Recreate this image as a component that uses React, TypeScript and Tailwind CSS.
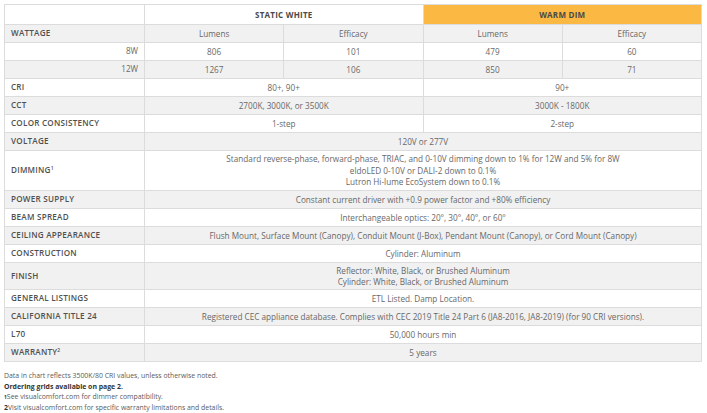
import React from "react";

type Row = {
  label: React.ReactNode;
  cells: { text: React.ReactNode; span: string }[];
  h?: string;
  right?: boolean;
};

export default function App() {
  const rows: Row[] = [
    {
      label: "WATTAGE",
      cells: [
        { text: "Lumens", span: "" },
        { text: "Efficacy", span: "" },
        { text: "Lumens", span: "" },
        { text: "Efficacy", span: "" },
      ],
    },
    {
      label: "8W",
      right: true,
      cells: [
        { text: "806", span: "" },
        { text: "101", span: "" },
        { text: "479", span: "" },
        { text: "60", span: "" },
      ],
    },
    {
      label: "12W",
      right: true,
      cells: [
        { text: "1267", span: "" },
        { text: "106", span: "" },
        { text: "850", span: "" },
        { text: "71", span: "" },
      ],
    },
    {
      label: "CRI",
      cells: [
        { text: "80+, 90+", span: "col-span-2" },
        { text: "90+", span: "col-span-2" },
      ],
    },
    {
      label: "CCT",
      cells: [
        { text: "2700K, 3000K, or 3500K", span: "col-span-2" },
        { text: "3000K - 1800K", span: "col-span-2" },
      ],
    },
    {
      label: "COLOR CONSISTENCY",
      cells: [
        { text: "1-step", span: "col-span-2" },
        { text: "2-step", span: "col-span-2" },
      ],
    },
    { label: "VOLTAGE", cells: [{ text: "120V or 277V", span: "col-span-4" }] },
    {
      label: (
        <>
          DIMMING<sup className="text-[5px] font-semibold">1</sup>
        </>
      ),
      h: "h-[39px]",
      cells: [
        {
          text: (
            <>
              Standard reverse-phase, forward-phase, TRIAC, and 0-10V dimming down to 1% for 12W and 5% for 8W
              <br />
              eldoLED 0-10V or DALI-2 down to 0.1%
              <br />
              Lutron Hi-lume EcoSystem down to 0.1%
            </>
          ),
          span: "col-span-4",
        },
      ],
    },
    {
      label: "POWER SUPPLY",
      cells: [{ text: "Constant current driver with +0.9 power factor and +80% efficiency", span: "col-span-4" }],
    },
    {
      label: "BEAM SPREAD",
      cells: [{ text: "Interchangeable optics: 20°, 30°, 40°, or 60°", span: "col-span-4" }],
    },
    {
      label: "CEILING APPEARANCE",
      cells: [
        {
          text: "Flush Mount, Surface Mount (Canopy), Conduit Mount (J-Box), Pendant Mount (Canopy), or Cord Mount (Canopy)",
          span: "col-span-4",
        },
      ],
    },
    { label: "CONSTRUCTION", cells: [{ text: "Cylinder: Aluminum", span: "col-span-4" }] },
    {
      label: "FINISH",
      h: "h-[26px]",
      cells: [
        {
          text: (
            <>
              Reflector: White, Black, or Brushed Aluminum
              <br />
              Cylinder: White, Black, or Brushed Aluminum
            </>
          ),
          span: "col-span-4",
        },
      ],
    },
    { label: "GENERAL LISTINGS", cells: [{ text: "ETL Listed. Damp Location.", span: "col-span-4" }] },
    {
      label: "CALIFORNIA TITLE 24",
      cells: [
        {
          text: "Registered CEC appliance database. Complies with CEC 2019 Title 24 Part 6 (JA8-2016, JA8-2019) (for 90 CRI versions).",
          span: "col-span-4",
        },
      ],
    },
    { label: "L70", cells: [{ text: "50,000 hours min", span: "col-span-4" }] },
    {
      label: (
        <>
          WARRANTY<sup className="text-[5px] font-semibold">2</sup>
        </>
      ),
      cells: [{ text: "5 years", span: "col-span-4" }],
    },
  ];

  return (
    <div className="w-[707px] h-[413px] bg-white pt-1 px-1 font-['Open_Sans',sans-serif] text-[#686868]">
      <div className="grid grid-cols-[139px_1fr_1fr_1fr_1fr] gap-px bg-[#dcdcdc] p-px w-[698px]">
        {/* header */}
        <div className="h-[19px] bg-white" />
        <div className="col-span-2 h-[19px] bg-white flex items-center justify-center text-[8px] font-bold tracking-[0.03em] text-[#4a4a4a]">
          STATIC WHITE
        </div>
        <div className="col-span-2 h-[19px] bg-[#fbb842] flex items-center justify-center text-[8px] font-bold tracking-[0.03em] text-[#4a4a4a]">
          WARM DIM
        </div>

        {rows.map((r, i) => {
          const bg = i % 2 === 0 ? "bg-[#f1f1f1]" : "bg-white";
          const h = r.h ?? "h-[17px]";
          return (
            <React.Fragment key={i}>
              <div
                className={`${h} ${bg} flex items-center px-[6px] text-[8.1px] ${
                  r.right ? "justify-end font-normal" : "font-semibold text-[#505050] tracking-[0.03em]"
                }`}
              >
                {r.label}
              </div>
              {r.cells.map((c, j) => (
                <div
                  key={j}
                  className={`${h} ${bg} ${c.span} flex items-center justify-center text-center text-[8.2px] leading-[11.5px]`}
                >
                  {c.text}
                </div>
              ))}
            </React.Fragment>
          );
        })}
      </div>

      <div className="mt-[9px] text-[6.9px] leading-[10.5px] text-[#5a5a5a]">
        <p>Data in chart reflects 3500K/80 CRI values, unless otherwise noted.</p>
        <p className="font-bold text-[#333]">Ordering grids available on page 2.</p>
        <p>
          <span className="font-bold text-[#333] text-[5px] align-top">1</span>See visualcomfort.com for dimmer compatibility.
        </p>
        <p>
          <span className="font-bold text-[#333]">2</span>Visit visualcomfort.com for specific warranty limitations and details.
        </p>
      </div>
    </div>
  );
}
